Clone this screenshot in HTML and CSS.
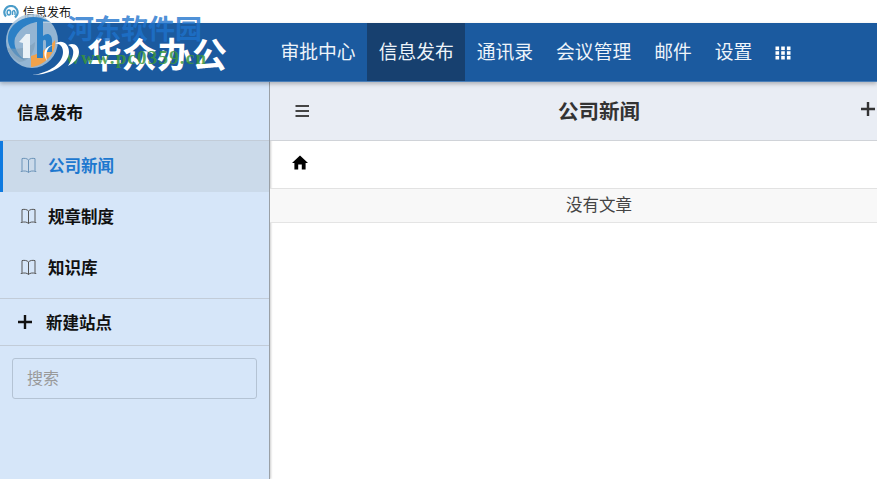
FILE: index.html
```html
<!DOCTYPE html>
<html>
<head>
  <title>信息发布</title>
  <link rel="stylesheet" href="styles.css">
</head>
<body>
  <div class="titlebar">
    <svg class="app-icon" width="16" height="14" viewBox="0 0 16 14">
      <path d="M3 11.5 C-1 7 3 1 8 1 C13 1 16 6 14 10 L12 12.5" fill="none" stroke="#4a9cc9" stroke-width="2.2"/>
      <path d="M6 5 C3.5 5 3.5 10 6 10 C8 10 8 5 6 5 Z M9.5 10 V6.5 C11 4.5 12.5 6 12 10" fill="none" stroke="#4a9cc9" stroke-width="1.5"/>
    </svg>
    <span>信息发布</span>
  </div>

  <div class="header">
    <div class="brand">
      <svg class="brand-mark" width="48" height="42" viewBox="0 0 48 42">
        <path d="M0 41 C18 39 31 29 31 18 C31 12 27 9 23 10 C29 5 37 9 37 18 C37 30 20 41 0 41 Z" fill="#fff"/>
        <path d="M36 11 C42 8 47 12 47 18 C47 24 42 29 36 32 C40 26 42 20 41 16 C40 13 38 12 36 11 Z" fill="#fff"/>
        <path d="M21 11 C15 13 13 20 15 27 C10 20 12 12 21 11 Z" fill="#fff"/>
      </svg>
      <span class="brand-name">华众办公</span>
    </div>
    <nav class="nav">
      <a class="nav-item">审批中心</a>
      <a class="nav-item active">信息发布</a>
      <a class="nav-item">通讯录</a>
      <a class="nav-item">会议管理</a>
      <a class="nav-item">邮件</a>
      <a class="nav-item">设置</a>
      <a class="nav-item nav-grid">
        <svg width="16" height="16" viewBox="0 0 16 16" fill="#fff">
          <rect x="0.5" y="1.5" width="3.6" height="3.6"/><rect x="6.2" y="1.5" width="3.6" height="3.6"/><rect x="11.9" y="1.5" width="3.6" height="3.6"/>
          <rect x="0.5" y="6.2" width="3.6" height="3.6"/><rect x="6.2" y="6.2" width="3.6" height="3.6"/><rect x="11.9" y="6.2" width="3.6" height="3.6"/>
          <rect x="0.5" y="10.9" width="3.6" height="3.6"/><rect x="6.2" y="10.9" width="3.6" height="3.6"/><rect x="11.9" y="10.9" width="3.6" height="3.6"/>
        </svg>
      </a>
    </nav>
  </div>

  <div class="main">
    <aside class="sidebar">
      <div class="side-title">信息发布</div>
      <a class="side-item current">
        <svg class="book" width="17" height="17" viewBox="0 0 17 17"><path d="M8.5 3 C7 1.4 4.5 1 2 1.6 V13.5 L1 14.5 C4 13.6 7 13.8 8.5 15.5 C10 13.8 13 13.6 16 14.5 L15 13.5 V1.6 C12.5 1 10 1.4 8.5 3 Z M8.5 3 V15.5"/></svg>
        <span>公司新闻</span>
      </a>
      <a class="side-item">
        <svg class="book" width="17" height="17" viewBox="0 0 17 17"><path d="M8.5 3 C7 1.4 4.5 1 2 1.6 V13.5 L1 14.5 C4 13.6 7 13.8 8.5 15.5 C10 13.8 13 13.6 16 14.5 L15 13.5 V1.6 C12.5 1 10 1.4 8.5 3 Z M8.5 3 V15.5"/></svg>
        <span>规章制度</span>
      </a>
      <a class="side-item">
        <svg class="book" width="17" height="17" viewBox="0 0 17 17"><path d="M8.5 3 C7 1.4 4.5 1 2 1.6 V13.5 L1 14.5 C4 13.6 7 13.8 8.5 15.5 C10 13.8 13 13.6 16 14.5 L15 13.5 V1.6 C12.5 1 10 1.4 8.5 3 Z M8.5 3 V15.5"/></svg>
        <span>知识库</span>
      </a>
      <a class="side-new">
        <svg width="16" height="16" viewBox="0 0 16 16"><path d="M8 1 V15 M1 8 H15" stroke="#111" stroke-width="2.4"/></svg>
        <span>新建站点</span>
      </a>
      <div class="side-search">
        <input class="search-input" placeholder="搜索">
      </div>
    </aside>

    <section class="content">
      <div class="toolbar">
        <svg class="menu-icon" width="16" height="14" viewBox="0 0 16 14"><path d="M1.5 2 H15 M1.5 7 H15 M1.5 12 H15" stroke="#444" stroke-width="2.2"/></svg>
        <h1 class="page-title">公司新闻</h1>
        <svg class="add-icon" width="16" height="16" viewBox="0 0 16 16"><path d="M8 1 V15 M1 8 H15" stroke="#333" stroke-width="2.4"/></svg>
      </div>
      <div class="crumbs">
        <svg width="16" height="15" viewBox="0 0 16 15"><path d="M8 0.5 L16 8 H13.6 V14.5 H9.8 V9.5 H6.2 V14.5 H2.4 V8 H0 Z" fill="#000"/></svg>
      </div>
      <div class="empty-row">没有文章</div>
    </section>
  </div>

  <div class="watermark">
    <svg class="wm-logo" width="54" height="58" viewBox="0 0 54 58">
      <ellipse cx="27" cy="29" rx="26" ry="27" fill="#a9c6dc" opacity="0.85"/>
      <path d="M4 20 C10 6 30 0 45 10 C32 8 16 12 10 26 C8 34 12 42 20 48 C8 44 0 32 4 20 Z" fill="#2c80c6"/>
      <path d="M2 36 C12 38 24 36 30 30 C30 40 24 50 14 50 C8 46 4 42 2 36 Z" fill="#7e9fb8" opacity="0.6"/>
      <path d="M26 44 C34 42 44 36 50 28 C52 40 40 54 26 55 Z" fill="#f0a24c"/>
      <path d="M14 30 L21 22 H25 V46 H18 V31 Z" fill="#e9f1f7"/>
      <path d="M32 8 H38 V24 C42 20 47 22 47 28 V40 H41 V30 C41 27 38 27 38 30 V46 H32 Z" fill="#2c80c6"/>
    </svg>
    <div class="wm-name">河东软件园</div>
    <div class="wm-url">www.pc0359.cn</div>
  </div>
</body>
</html>
```

FILE: styles.css
```css
* { box-sizing: border-box; }
html, body { height: 100%; }
body {
  margin: 0;
  overflow: hidden;
  position: relative;
  font-family: "Liberation Sans", "Noto Sans CJK SC", sans-serif;
  background: #fff;
  color: #333;
}

.titlebar {
  height: 23px;
  display: flex;
  align-items: center;
  gap: 4px;
  padding-left: 3px;
  font-size: 12px;
  color: #111;
  background: #fff;
}

.header {
  height: 59px;
  display: flex;
  background: #1b5a9f;
  border-bottom: 1px solid #4a7fb8;
  box-shadow: 0 2px 4px rgba(0,0,0,0.25);
  position: relative;
}
.brand {
  width: 269px;
  display: flex;
  align-items: center;
  padding-left: 32px;
}
.brand-mark {
  flex: none;
  position: relative;
  z-index: 4;
  margin-top: 6px;
}
.brand-name {
  margin-left: 7px;
  margin-top: 1px;
  font-size: 35px;
  font-weight: bold;
  color: #fff;
  white-space: nowrap;
}
.nav { display: flex; }
.nav-item {
  display: flex;
  align-items: center;
  padding: 0 11.5px 3px;
  font-size: 18.8px;
  color: #eef4fa;
}
.nav-item.active { background: #17406f; }
.nav-grid { padding: 2px 0 0 11px; }

.main {
  display: flex;
  height: calc(100% - 82px);
}
.sidebar {
  width: 270px;
  flex: none;
  background: #d6e6f9;
  border-right: 1px solid #9aa0a6;
  box-shadow: 1px 0 2px rgba(0,0,0,0.2);
}
.side-title {
  height: 59px;
  padding: 2px 17px 0;
  display: flex;
  align-items: center;
  font-size: 16.5px;
  font-weight: bold;
  color: #111;
  border-bottom: 1px solid #c2ccd8;
}
.side-item {
  height: 51px;
  display: flex;
  align-items: center;
  gap: 11px;
  padding: 0 0 3px 20px;
  font-size: 16.5px;
  font-weight: bold;
  color: #111;
}
.side-item.current {
  padding-left: 17px;
  color: #1d78cf;
  background: #cbdaea;
  border-left: 3px solid #0f7ae0;
}
.book { fill: none; stroke: #555; stroke-width: 1; }
.current .book { stroke: #6b93b8; }
.side-new {
  height: 48px;
  margin-top: 4px;
  display: flex;
  align-items: center;
  gap: 13px;
  padding-left: 17px;
  font-size: 16.5px;
  font-weight: bold;
  color: #111;
  border-top: 1px solid #c2ccd8;
  border-bottom: 1px solid #c2ccd8;
}
.side-search { padding: 12px 12px 0; }
.search-input {
  width: 245px;
  height: 41px;
  padding: 0 14px;
  font: 16px "Liberation Sans", "Noto Sans CJK SC", sans-serif;
  background: #d6e6f9;
  border: 1px solid #b4c3d4;
  border-radius: 3px;
}
.search-input::placeholder { color: #999; }

.content { flex: 1; min-width: 0; overflow: hidden; }
.toolbar {
  height: 59px;
  width: 658px;
  display: grid;
  grid-template-columns: 1fr auto 1fr;
  align-items: center;
  padding: 0 24px;
  background: #e9edf4;
  border-bottom: 1px solid #d0d3d8;
}
.add-icon { justify-self: end; margin-right: 28px; margin-bottom: 4px; }
.page-title {
  margin: 0 0 2px;
  font-size: 20.5px;
  font-weight: bold;
  color: #333;
}
.crumbs {
  height: 48px;
  display: flex;
  align-items: center;
  padding: 0 0 4px 22px;
  border-bottom: 1px solid #e2e2e2;
}
.empty-row {
  height: 34px;
  width: 658px;
  display: flex;
  align-items: center;
  justify-content: center;
  padding-bottom: 3px;
  font-size: 16.5px;
  color: #444;
  background: #f8f8f8;
  border-bottom: 1px solid #e4e4e4;
}

.watermark {
  position: absolute;
  left: 0;
  top: 0;
  width: 260px;
  height: 75px;
  z-index: 3;
  pointer-events: none;
}
.wm-logo { position: absolute; left: 5px; top: 12px; }
.wm-name {
  position: absolute;
  left: 67px;
  top: 8px;
  font: bold 27px "Noto Sans CJK SC", sans-serif;
  color: rgba(30,115,205,0.8);
}
.wm-url {
  position: absolute;
  left: 66px;
  top: 47px;
  font: bold 19px "Liberation Serif", serif;
  letter-spacing: 1.2px;
  color: rgba(60,150,60,0.85);
}
```
